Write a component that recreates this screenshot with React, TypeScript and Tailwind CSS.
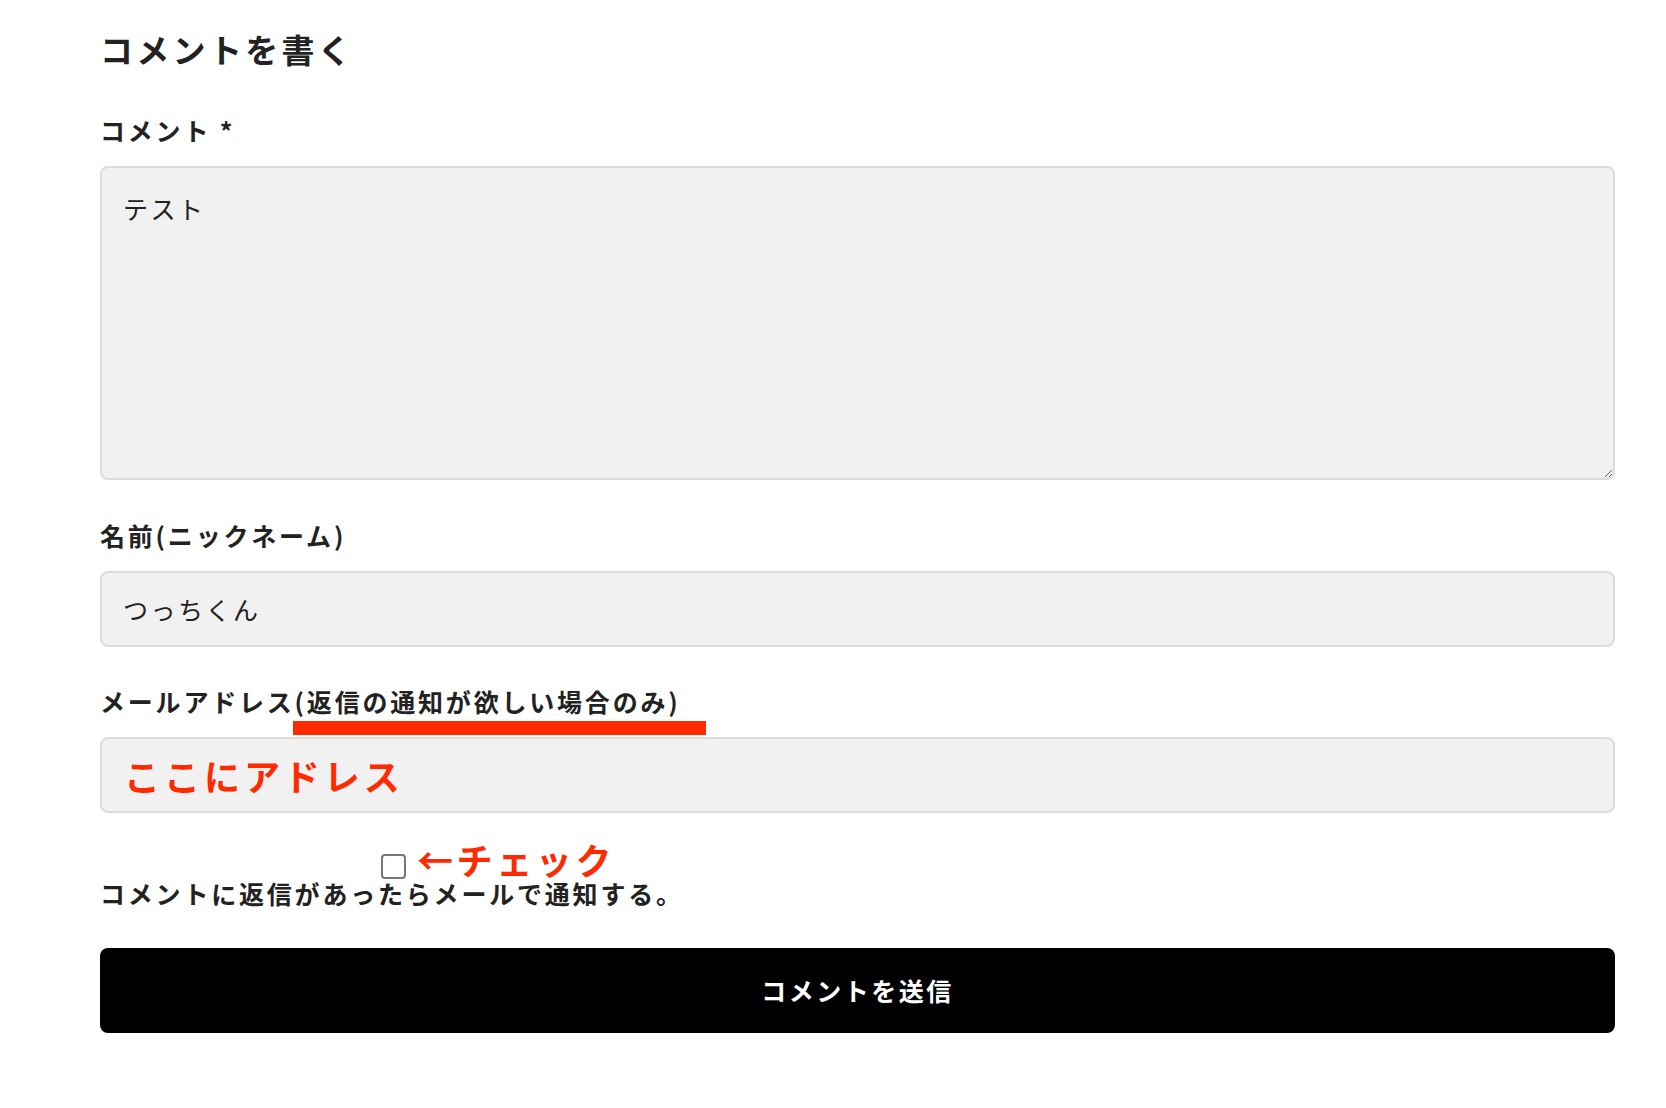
import React from "react";

const font = "font-['Noto_Sans_CJK_JP','Noto_Sans',sans-serif]";

export default function App() {
  return (
    <div className={`min-h-[1108px] w-full bg-white text-[#222] ${font}`}>
      <div className="ml-[100px] flex w-[1515px] flex-col pt-[33px]">
        {/* 見出し */}
        <h2 className="text-[33px] font-bold leading-[33px] tracking-[0.1em]">コメントを書く</h2>

        {/* コメント */}
        <label className="mt-[52px] text-[25px] font-bold leading-[25px] tracking-[2.8px]">
          コメント *
        </label>
        <textarea
          readOnly
          defaultValue="テスト"
          className="mt-[23px] h-[314px] w-full resize-y rounded-[8px] border-2 border-[#dcdcdc] bg-[#f1f1f1] px-[21px] py-[28px] text-[25px] leading-[25px] tracking-[0.1em] text-[#222] outline-none"
        />

        {/* 名前 */}
        <label className="mt-[43px] text-[25px] font-bold leading-[25px] tracking-[2.8px]">
          名前(ニックネーム)
        </label>
        <input
          readOnly
          defaultValue="つっちくん"
          className="mt-[23px] h-[76px] w-full rounded-[8px] border-2 border-[#dcdcdc] bg-[#f1f1f1] px-[21px] text-[25px] leading-[25px] tracking-[0.1em] text-[#222] outline-none"
        />

        {/* メールアドレス */}
        <div className="relative mt-[42px]">
          <label className="block text-[25px] font-bold leading-[25px] tracking-[2.8px]">
            メールアドレス(返信の通知が欲しい場合のみ)
          </label>
          <span className="absolute left-[193px] top-[32px] h-[14px] w-[413px] bg-[#ff2a00]" />
        </div>
        <input
          readOnly
          defaultValue="ここにアドレス"
          className="mt-[23px] h-[76px] w-full rounded-[8px] border-2 border-[#dcdcdc] bg-[#f1f1f1] px-[22px] text-[36px] font-bold leading-[36px] tracking-[0.11em] text-[#ff2a00] outline-none"
        />

        {/* 通知チェック */}
        <div className="mt-[30px] flex items-start pl-[281px]">
          <input
            type="checkbox"
            className="mt-[11px] h-[25px] w-[25px] appearance-none rounded-[4px] border-2 border-[#777] bg-white"
          />
          <span className="ml-[11px] text-[36px] font-bold leading-[32px] tracking-[0.1em] text-[#ff2a00]">
            ←チェック
          </span>
        </div>
        <p className="mt-[2px] text-[25px] font-bold leading-[25px] tracking-[2.8px]">
          コメントに返信があったらメールで通知する。
        </p>

        {/* 送信 */}
        <button className="mt-[42px] flex h-[85px] w-full items-center justify-center rounded-[8px] bg-black text-[25px] font-bold leading-[25px] tracking-[0.1em] text-white">
          コメントを送信
        </button>
      </div>
    </div>
  );
}
